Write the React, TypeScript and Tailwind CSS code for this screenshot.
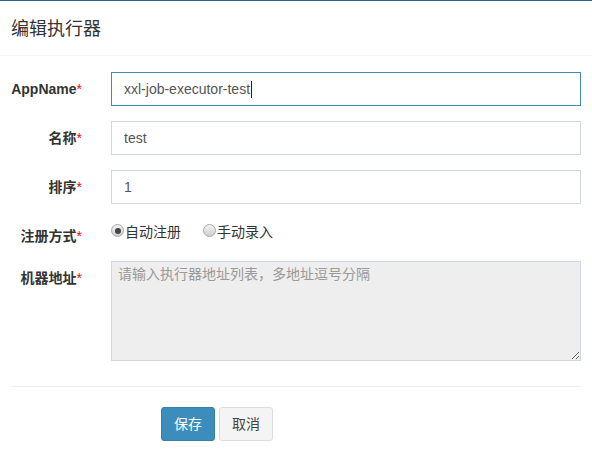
import React from 'react';

const FONT = { fontFamily: '"Liberation Sans", "Noto Sans CJK SC", sans-serif' };

function Label({ text }: { text: string }) {
  return (
    <label className="w-[71px] shrink-0 pt-[7px] text-right text-[14px] leading-5 font-bold text-[#333] whitespace-nowrap">
      {text}
      <span className="text-[#f00] font-normal">*</span>
    </label>
  );
}

function Radio({ checked, text }: { checked?: boolean; text: string }) {
  return (
    <span className="flex items-center text-[14px] leading-5 text-[#333]">
      <span className="mt-[-3px] mr-px flex h-[13px] w-[13px] items-center justify-center rounded-full border border-[#a9a9a9] bg-gradient-to-b from-[#f2f2f2] to-[#cfcfcf]">
        {checked && <span className="h-[6px] w-[6px] rounded-full bg-[#444]" />}
      </span>
      {text}
    </span>
  );
}

export default function App() {
  return (
    <div className="h-[470px] w-[592px] border-t border-[#2c6386] bg-white" style={FONT}>
      {/* Header */}
      <div className="h-[55px] border-b border-[#f4f4f4] px-[11px] pt-[16px]">
        <h4 className="text-[18px] leading-6 text-[#333]">编辑执行器</h4>
      </div>

      {/* Form body */}
      <div className="flex flex-col gap-[15px] pt-[16px] pl-[11px] pr-[11px]">
        <div className="flex gap-[29px]">
          <Label text="AppName" />
          <div className="flex h-[34px] flex-1 items-center border border-[#3c8dbc] px-3 text-[14px] text-[#555]">
            xxl-job-executor-test
            <span className="ml-px inline-block h-[17px] w-px bg-[#222]" />
          </div>
        </div>
        <div className="flex gap-[29px]">
          <Label text="名称" />
          <input
            readOnly
            value="test"
            className="h-[34px] flex-1 border border-[#d2d6de] px-3 text-[14px] text-[#555] outline-none"
          />
        </div>
        <div className="flex gap-[29px]">
          <Label text="排序" />
          <input
            readOnly
            value="1"
            className="h-[34px] flex-1 border border-[#d2d6de] px-3 text-[14px] text-[#555] outline-none"
          />
        </div>
        <div className="flex gap-[29px]">
          <Label text="注册方式" />
          <div className="flex h-[26px] flex-1 gap-[22px]">
            <Radio checked text="自动注册" />
            <Radio text="手动录入" />
          </div>
        </div>
        <div className="flex gap-[29px]">
          <Label text="机器地址" />
          <textarea
            readOnly
            placeholder="请输入执行器地址列表，多地址逗号分隔"
            className="h-[100px] flex-1 border border-[#d2d6de] bg-[#eee] px-[6px] py-[2px] text-[14px] leading-5 text-[#555] placeholder:text-[#999] outline-none"
          />
        </div>
      </div>

      {/* Footer */}
      <div className="mx-[11px] mt-[25px] border-t border-[#eee] pt-[20px]">
        <div className="flex gap-[4px] pl-[150px]">
          <button className="h-[34px] w-[54px] rounded-[3px] border border-[#367fa9] bg-[#3c8dbc] text-[14px] text-white">
            保存
          </button>
          <button className="h-[34px] w-[54px] rounded-[3px] border border-[#ddd] bg-[#f4f4f4] text-[14px] text-[#444]">
            取消
          </button>
        </div>
      </div>
    </div>
  );
}
